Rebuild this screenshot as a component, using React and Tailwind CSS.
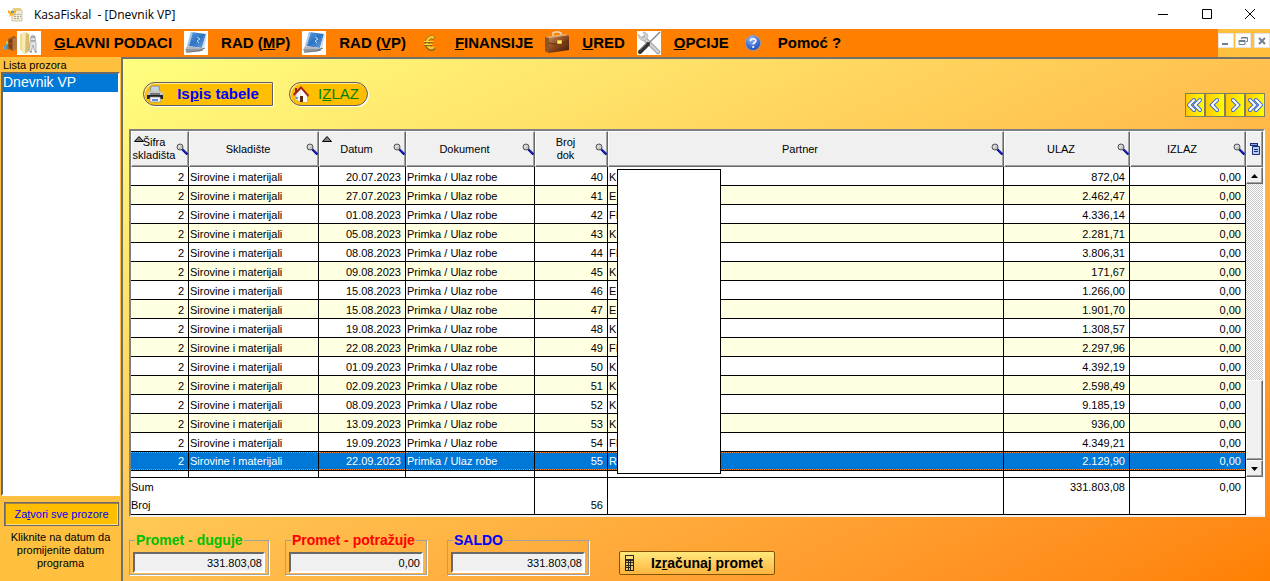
import React from 'react';

const ROWS = [
  ['20.07.2023', 40, 'K', '872,04'],
  ['27.07.2023', 41, 'E', '2.462,47'],
  ['01.08.2023', 42, 'FI', '4.336,14'],
  ['05.08.2023', 43, 'K', '2.281,71'],
  ['08.08.2023', 44, 'FI', '3.806,31'],
  ['09.08.2023', 45, 'K', '171,67'],
  ['15.08.2023', 46, 'E', '1.266,00'],
  ['15.08.2023', 47, 'E', '1.901,70'],
  ['19.08.2023', 48, 'K', '1.308,57'],
  ['22.08.2023', 49, 'FI', '2.297,96'],
  ['01.09.2023', 50, 'K', '4.392,19'],
  ['02.09.2023', 51, 'K', '2.598,49'],
  ['08.09.2023', 52, 'K', '9.185,19'],
  ['13.09.2023', 53, 'K', '936,00'],
  ['19.09.2023', 54, 'FI', '4.349,21'],
  ['22.09.2023', 55, 'R', '2.129,90'],
];

const COLUMNS = [
  { label: 'Šifra skladišta', width: 'w-[58px]', sorted: true },
  { label: 'Skladište', width: 'w-[130px]' },
  { label: 'Datum', width: 'w-[87px]', sorted: true },
  { label: 'Dokument', width: 'w-[129px]' },
  { label: 'Broj dok', width: 'w-[73px]', narrow: true },
  { label: 'Partner', width: '' },
  { label: 'ULAZ', width: 'w-[126px]' },
  { label: 'IZLAZ', width: 'w-[116px]' },
];

const AppIcon = () => (
  <svg width="16" height="16" viewBox="0 0 16 16" aria-hidden="true">
    <path d="M4 3h10v11H4z" fill="#f3ecd2" stroke="#b9b39a" strokeWidth=".7" />
    <path d="M5 1h8v3H5z" fill="#e9cf86" />
    <path d="M6 7h2v1H6zM9 7h2v1H9zM12 7h1v1h-1zM6 9h2v1H6zM9 9h2v1H9zM12 9h1v1h-1zM6 11h2v1H6zM9 11h2v1H9z" fill="#a6a595" />
    <path d="M0 3l4 2 4-2v3L5 7l2 3-3-2-3 2 1-3-2-1z" fill="#f2b521" />
    <path d="M3 4h3v2H3z" fill="#5f9bd8" />
  </svg>
);

const DoorIcon = () => (
  <svg width="14" height="16" viewBox="0 0 14 16" aria-hidden="true">
    <path d="M5 4l6-3 3 2v11l-4 2-5-2z" fill="#9a5a22" />
    <path d="M10 3l4 0v11l-4 2z" fill="#b9763a" />
    <path d="M6 5l3-1v4L6 8zM6 9h3v5l-3-1z" fill="#7a3f12" />
    <path d="M1 11h1v4H1zM3 8h1v6H3z" fill="#4c9ac0" />
    <path d="M3 6h2v3H3zM0 12h1v2H0z" fill="#d9c04a" />
    <path d="M4 10h1v4H4z" fill="#5d9a3e" />
  </svg>
);

const FolderIcon = () => (
  <svg width="24" height="24" viewBox="0 0 24 24" aria-hidden="true">
    <path d="M0 0h24v24H0z" fill="#fff" />
    <path d="M3 3l5-2v20l-5-2z" fill="#efdb94" />
    <path d="M5 2l5-1v20l-3 2-2-2z" fill="#f6e9b4" />
    <path d="M9 2l3 1v17l-4 3z" fill="#d8bd6c" />
    <path d="M12 3h5l1 16h-6z" fill="#efefed" />
    <path d="M14 6c1-2 4-2 4 0l1 6v8l-1 1-2-7-2 7-2-1 1-9z" fill="#e2e2e2" stroke="#999" strokeWidth=".7" />
    <path d="M14 6h4M14 10h4M13 21h2M18 21h2" stroke="#777" />
  </svg>
);

const BookIcon = () => (
  <svg width="24" height="24" viewBox="0 0 24 24" aria-hidden="true">
    <defs>
      <linearGradient id="book" x1="0" y1="0" x2="1" y2="1">
        <stop offset="0" stopColor="#5d9fe0" />
        <stop offset=".5" stopColor="#2f74c4" />
        <stop offset="1" stopColor="#6fa5de" />
      </linearGradient>
    </defs>
    <path d="M0 0h24v24H0z" fill="#fff" />
    <path d="M7 1l15 2-4 14-14-2z" fill="url(#book)" />
    <path d="M7 1l2 0-4 14-2-1z" fill="#a9c9ea" />
    <path d="M3 15l15 2 3 0-4 3-14 2-2-3z" fill="#b4b9bf" />
    <path d="M2 19l14 0 5-2M2 21l13-1 4-1" fill="none" stroke="#5f666e" strokeWidth=".8" />
    <path d="M18 16l4-13 1 1-3 13z" fill="#cfdcec" />
    <path d="M13 6l3 2-3 2 2 2" fill="none" stroke="#c3dcf5" />
  </svg>
);

const EuroIcon = () => (
  <svg width="16" height="16" viewBox="0 0 16 16" aria-hidden="true">
    <path d="M12.500 3.500C9.500 1 5.500 2.500 5 7.500 4.500 13 9 15.500 12.500 12.500" fill="none" stroke="#8a6412" strokeWidth="4" />
    <path d="M12 3C9.500 1 5.500 2.500 5 7.500 4.500 12 9 14.500 12 12" fill="none" stroke="#f5c62a" strokeWidth="2.600" />
    <path d="M2 7h9M2 10h8" stroke="#8a6412" strokeWidth="2" />
    <path d="M2 6.500h9M2 9.500h8" stroke="#ffdc4a" />
  </svg>
);

const BriefcaseIcon = () => (
  <svg width="24" height="24" viewBox="0 0 24 24" aria-hidden="true">
    <defs>
      <linearGradient id="brief" x1="0" y1="0" x2="1" y2="1">
        <stop offset="0" stopColor="#d49c68" />
        <stop offset=".5" stopColor="#8d4b1e" />
        <stop offset="1" stopColor="#3c1804" />
      </linearGradient>
    </defs>
    <path d="M8 6V2l2-1h4l2 1v3" fill="none" stroke="#e8d8c4" strokeWidth="1.500" />
    <path d="M1 6l3 1 19-3 1 1v14L4 22l-4-2z" fill="url(#brief)" />
    <path d="M0 6l19-3 5 1-20 3z" fill="#dcae7d" />
    <path d="M4 7v15l-4-2V6z" fill="#8c5228" />
    <path d="M4 12c7 2 14 1 20-3" fill="none" stroke="#5e2c0c" />
    <path d="M12 9h5v4h-5z" fill="#e6b92c" />
    <path d="M13 10h3v2h-3z" fill="#fff67a" />
  </svg>
);

const ToolsIcon = () => (
  <svg width="24" height="24" viewBox="0 0 24 24" aria-hidden="true">
    <path d="M0 0h24v24H0z" fill="#fff" />
    <path d="M7 7l14 14" stroke="#999" strokeWidth="4.500" strokeLinecap="round" />
    <path d="M7 7l14 14" stroke="#d0d0d0" strokeWidth="2.500" strokeLinecap="round" />
    <path d="M1 3l4 4 3-2-2-4c4 0 6 3 4 7-3 3-8 2-9-5z" fill="#d0d0d0" stroke="#aaa" strokeWidth=".7" />
    <path d="M23 1L11 13" stroke="#888" strokeWidth="1.500" />
    <path d="M11 13l-8 8" stroke="#333" strokeWidth="4" strokeLinecap="round" />
    <path d="M10 12l-7 7" stroke="#777" />
  </svg>
);

const HelpIcon = () => (
  <svg width="16" height="16" viewBox="0 0 16 16" aria-hidden="true">
    <defs>
      <radialGradient id="help" cx=".4" cy=".25" r=".8">
        <stop offset="0" stopColor="#9fbdf2" />
        <stop offset=".6" stopColor="#3f6fd2" />
        <stop offset="1" stopColor="#2346a5" />
      </radialGradient>
    </defs>
    <circle cx="8" cy="8" r="7.500" fill="url(#help)" stroke="#8ba2cc" strokeWidth=".8" />
    <path d="M5.500 6c0-3 5.500-3 5.300 0C10.700 7.600 8.300 7.500 8.200 9.500" fill="none" stroke="#fff" strokeWidth="1.700" />
    <circle cx="8.200" cy="12" r="1.100" fill="#fff" />
  </svg>
);

const PrinterIcon = () => (
  <svg width="18" height="18" viewBox="0 0 18 18" aria-hidden="true">
    <path d="M5 1h8l1 6H4z" fill="#c5d0e0" stroke="#777" strokeWidth=".7" />
    <path d="M1 8l3-2h10l3 2v3H1z" fill="#c4c4c4" />
    <path d="M1 10h16v4H1z" fill="#222" />
    <path d="M4 8h10v2H4z" fill="#777" />
    <path d="M4 12h10l1 5H4z" fill="#f4f4f4" stroke="#888" strokeWidth=".7" />
    <path d="M6 14h6v2H6z" fill="#5d8cd6" />
  </svg>
);

const HouseIcon = () => (
  <svg width="18" height="18" viewBox="0 0 18 18" aria-hidden="true">
    <path d="M4 9l5-6 6 6v8l-6 0-5-2z" fill="#f0f0ee" stroke="#aaa" strokeWidth=".6" />
    <path d="M9 3l6 6v8H9z" fill="#fff" />
    <path d="M9 1L1 9l1 2 7-7 7 8 1-2z" fill="#a3261a" />
    <path d="M3 3h2v4L3 8z" fill="#8f2417" />
    <path d="M8 11h3v6H8z" fill="#5b2c14" />
    <path d="M4 12h2v2H4z" fill="#7393bf" />
  </svg>
);

const MagnifierIcon = () => (
  <svg className="shrink-0" width="12" height="12" viewBox="0 0 12 12" aria-hidden="true">
    <path d="M6 6l5.500 5.500" stroke="#000080" strokeWidth="2.400" />
    <path d="M6.500 6l5 5" stroke="#3c3cff" />
    <circle cx="4" cy="4" r="3" fill="#c8c8c8" stroke="#555" />
    <path d="M2.500 4.500L4 2.500" stroke="#fff" />
  </svg>
);

const CalculatorIcon = () => (
  <svg width="9" height="16" viewBox="0 0 9 16" aria-hidden="true">
    <path d="M0 0h9v16H0z" fill="#2b2620" />
    <path d="M1 1h7v3H1z" fill="#ffe27a" />
    <path d="M1 6h2v1H1zM4 6h1v1H4zM6 6h2v1H6zM1 8h2v2H1zM4 8h1v2H4zM6 8h2v2H6zM1 11h2v1H1zM4 11h1v1H4zM6 11h2v4H6zM1 13h2v2H1zM4 13h1v2H4z" fill="#f0c65c" />
  </svg>
);

const ColumnsIcon = () => (
  <svg width="10" height="12" viewBox="0 0 10 12" aria-hidden="true">
    <path d="M0 0h8v3H0z" fill="#1a2f78" />
    <path d="M1 1h6v1H1z" fill="#8fa8e8" />
    <path d="M2.500 3.500h7v8h-7z" fill="#b8ccf8" stroke="#1a2f78" />
    <path d="M4 6.500h4M4 8.500h4" stroke="#1a2f78" />
  </svg>
);

const Chevron = ({ paths }) => (
  <svg width="16" height="16" viewBox="0 0 16 16" fill="none" strokeLinecap="round" aria-hidden="true">
    {paths.map((d) => <path key={d} d={d} stroke="#3c68d8" strokeWidth="4" />)}
    {paths.map((d) => <path key={d} d={d} stroke="#fff" strokeWidth="2" />)}
  </svg>
);

const NAV = [
  { label: 'Prvi', paths: ['M7 3L2 8l5 5', 'M13 3L8 8l5 5'] },
  { label: 'Prethodni', paths: ['M10 3L5 8l5 5'] },
  { label: 'Sljedeći', paths: ['M6 3l5 5-5 5'] },
  { label: 'Zadnji', paths: ['M3 3l5 5-5 5', 'M9 3l5 5-5 5'] },
];

const MENU = [
  { icon: <FolderIcon />, text: <><u>G</u>LAVNI PODACI</> },
  { icon: <BookIcon />, text: <>RAD (<u>M</u>P)</> },
  { icon: <BookIcon />, text: <>RAD (<u>V</u>P)</> },
  { icon: <EuroIcon />, text: <><u>F</u>INANSIJE</> },
  { icon: <BriefcaseIcon />, text: <><u>U</u>RED</> },
  { icon: <ToolsIcon />, text: <><u>O</u>PCIJE</> },
  { icon: <HelpIcon />, text: 'Pomoć ?' },
];

const TitleBar = () => (
  <header className="flex h-[29px] items-center bg-white pl-2 font-['Open_Sans',sans-serif] text-xs text-black">
    <AppIcon />
    <span className="ml-[10px] flex-1 whitespace-pre">KasaFiskal  - [Dnevnik VP]</span>
    <button aria-label="Smanji" className="flex h-full w-[45px] items-center justify-center">
      <svg width="10" height="10" viewBox="0 0 10 10"><path d="M0 4.500h10" stroke="#000" /></svg>
    </button>
    <button aria-label="Povećaj" className="flex h-full w-[45px] items-center justify-center">
      <svg width="11" height="11" viewBox="0 0 11 11"><path d="M.5.5h9v9h-9z" fill="none" stroke="#000" /></svg>
    </button>
    <button aria-label="Zatvori" className="flex h-full w-10 items-center justify-center">
      <svg width="11" height="11" viewBox="0 0 11 11"><path d="M0 0l10 10M10 0L0 10" stroke="#000" /></svg>
    </button>
  </header>
);

const MdiButton = ({ label, children }) => (
  <button aria-label={label} className="flex h-[15px] w-4 items-center justify-center border border-[#e4e4e4] bg-white">
    <svg width="10" height="10" viewBox="0 0 10 10" fill="none" stroke="#708090">{children}</svg>
  </button>
);

const MenuBar = () => (
  <nav className="flex h-7 items-stretch bg-[#ff8000] pl-[3px]">
    <div className="flex items-center"><DoorIcon /></div>
    <div className="flex flex-1 items-center gap-3">
      {MENU.map((item, i) => (
        <button key={i} className="flex items-center gap-[13px] whitespace-nowrap text-[15px] leading-5 font-bold">
          <span className="flex w-6 justify-center">{item.icon}</span>
          <span>{item.text}</span>
        </button>
      ))}
    </div>
    <div className="flex items-start gap-px bg-[#ffc040] pt-1">
      <MdiButton label="Smanji prozor"><path d="M1 8h6" strokeWidth="2" /></MdiButton>
      <MdiButton label="Vrati prozor"><path d="M3.500 3V1.500h6v4H8M1 4.500h6v4H1zM1 5.500h6M4 2h5" /></MdiButton>
      <span className="w-px" />
      <MdiButton label="Zatvori prozor"><path d="M2 2l6 6M8 2L2 8" strokeWidth="2" /></MdiButton>
    </div>
  </nav>
);

const Sidebar = () => (
  <aside className="flex w-[121px] shrink-0 flex-col bg-[#ffc040]">
    <h2 className="pt-[2px] pl-[3px] leading-[13px]">Lista prozora</h2>
    <ul className="mx-px flex-1 border-2 border-t-[#696969] border-r-white border-b-white border-l-[#696969] bg-white">
      <li className="bg-[#0078d7] pb-[2px] text-sm leading-4 text-white">Dnevnik VP</li>
    </ul>
    <button className="mt-[6px] mr-[2px] ml-1 h-6 border border-[#696969] bg-[#ffbf00] leading-4 whitespace-nowrap text-[#0000ff] shadow-[inset_1px_1px_0_#a08040,inset_-1px_-1px_0_#ffe08a]">
      Za<u>t</u>vori sve prozore
    </button>
    <p className="px-2 pt-[5px] pb-[11px] text-center leading-[13px]">Kliknite na datum da promijenite datum programa</p>
  </aside>
);

const Toolbar = () => (
  <div className="flex h-[70px] items-start justify-between">
    <div className="flex gap-4 pt-[23px] pl-[14px] text-[15px] font-bold">
      <button className="flex h-6 w-[130px] items-center rounded-l-full border border-[#606060] bg-[#ffbf00] pl-[2px] text-[#0000ff] shadow-[1px_1px_0_#fff,inset_1px_1px_0_#ffe9a0]">
        <PrinterIcon />
        <span className="flex-1 text-center leading-5">Is<u>p</u>is tabele</span>
      </button>
      <button className="flex h-6 w-[79px] items-center rounded-full border border-[#606060] bg-[#ffbf00] pl-[2px] text-[#008000] shadow-[1px_1px_0_#fff,inset_1px_1px_0_#ffe9a0]">
        <HouseIcon />
        <span className="flex-1 text-center leading-5 font-normal">I<u>Z</u>LAZ</span>
      </button>
    </div>
    <div className="mt-[34px] flex">
      {NAV.map(({ label, paths }) => (
        <button key={label} aria-label={label} className="flex h-6 w-5 items-center justify-center border border-[#808060] bg-linear-to-r from-[#ffc800] to-[#ffff00]">
          <Chevron paths={paths} />
        </button>
      ))}
    </div>
  </div>
);

const bevel = 'border border-t-white border-l-white border-r-[#696969] border-b-[#696969] bg-[#f0f0f0] shadow-[inset_-1px_-1px_0_#a0a0a0]';

const HeaderCell = ({ label, width, sorted, narrow }) => (
  <th className={`relative h-9 p-0 font-normal ${bevel} ${width}`}>
    {sorted && (
      <svg className="absolute top-1 left-[2px]" width="10" height="6" viewBox="0 0 10 6" aria-hidden="true">
        <path d="M5 .5L9.500 5.500h-9z" fill="#808080" stroke="#000" />
      </svg>
    )}
    <div className="flex items-center">
      <span className={`min-w-0 flex-1 text-center leading-[13px] ${narrow ? 'px-4' : ''}`}>{label}</span>
      <MagnifierIcon />
    </div>
  </th>
);

const Cell = ({ children, right, selected }) => (
  <td className="h-[19px] overflow-hidden border-r border-b border-black p-0 whitespace-nowrap">
    <div className={`h-[18px] ${right ? 'pr-1 text-right' : 'pl-px'} ${selected ? 'border-y border-dotted border-[#ff8728] bg-[#0078d7] leading-4 text-white' : 'leading-5'}`}>
      {children}
    </div>
  </td>
);

const Ledger = () => (
  <div className="relative min-w-0 flex-1">
    <table className="w-full table-fixed border-separate border-spacing-0 bg-white">
      <thead>
        <tr>{COLUMNS.map((c) => <HeaderCell key={c.label} {...c} />)}</tr>
      </thead>
      <tbody>
        {ROWS.map(([date, no, partner, inflow], i) => {
          const selected = i === ROWS.length - 1;
          return (
            <tr key={no} className={i % 2 ? 'bg-[#ffffe1]' : 'bg-white'}>
              <Cell right selected={selected}>2</Cell>
              <Cell selected={selected}>Sirovine i materijali</Cell>
              <Cell right selected={selected}>{date}</Cell>
              <Cell selected={selected}>Primka / Ulaz robe</Cell>
              <Cell right selected={selected}>{no}</Cell>
              <Cell selected={selected}>{partner}</Cell>
              <Cell right selected={selected}>{inflow}</Cell>
              <Cell right selected={selected}>0,00</Cell>
            </tr>
          );
        })}
        <tr>
          {COLUMNS.map((c) => <td key={c.label} className="h-[7px] border-r border-b border-black p-0" />)}
        </tr>
      </tbody>
      <tfoot className="leading-[18px]">
        <tr>
          <td colSpan={4} className="h-[18px] border-r border-black p-0">Sum</td>
          <td className="border-r border-black p-0" />
          <td className="border-r border-black p-0" />
          <td className="border-r border-black p-0 pr-1 text-right">331.803,08</td>
          <td className="border-r border-black p-0 pr-1 text-right">0,00</td>
        </tr>
        <tr>
          <td colSpan={4} className="h-[19px] border-r border-b border-black p-0">Broj</td>
          <td className="border-r border-b border-black p-0 pr-1 text-right">56</td>
          <td className="border-r border-b border-black p-0" />
          <td className="border-r border-b border-black p-0" />
          <td className="border-r border-b border-black p-0" />
        </tr>
      </tfoot>
    </table>
    {/* covers the partner names */}
    <div className="absolute top-[38px] left-[486px] h-[305px] w-[104px] border border-black bg-white" />
  </div>
);

const ScrollColumn = () => (
  <div className="flex w-[17px] shrink-0 flex-col bg-white">
    <button aria-label="Kolone" className={`flex h-9 items-center justify-center ${bevel}`}><ColumnsIcon /></button>
    <button aria-label="Gore" className={`flex h-[17px] items-center justify-center ${bevel}`}>
      <svg width="7" height="4" viewBox="0 0 7 4"><path d="M3.500 0L7 4H0z" /></svg>
    </button>
    <div className="flex flex-1 flex-col justify-end bg-[conic-gradient(#fff_25%,#c8c8c8_0_50%,#fff_0_75%,#c8c8c8_0)] bg-size-[2px_2px]">
      <div className={`h-20 ${bevel}`} />
    </div>
    <button aria-label="Dolje" className={`mb-[38px] flex h-[17px] items-center justify-center ${bevel}`}>
      <svg width="7" height="4" viewBox="0 0 7 4"><path d="M0 0h7L3.500 4z" /></svg>
    </button>
  </div>
);

const TotalBox = ({ id, label, value, color, width }) => (
  <fieldset className={`h-[43px] border border-[#a0a0a0] px-[3px] shadow-[1px_1px_0_#fff] ${width}`}>
    <legend className={`ml-[2px] px-px text-sm leading-4 font-bold whitespace-nowrap ${color}`}>
      <label htmlFor={id}>{label}</label>
    </legend>
    <input
      id={id}
      readOnly
      value={value}
      className="mt-1 block h-[21px] w-full border-2 border-t-[#696969] border-r-white border-b-white border-l-[#696969] bg-[#f0f0f0] pr-px text-right outline-none"
    />
  </fieldset>
);

export default function App() {
  return (
    <div className="flex min-h-screen flex-col font-['Liberation_Sans',sans-serif] text-[11px] text-black">
      <TitleBar />
      <MenuBar />
      <div className="flex flex-1">
        <Sidebar />
        <main className="min-w-0 flex-1 border-t-2 border-l-2 border-[#707070] bg-linear-to-br from-[#ffff80] to-[#ff8000] pr-[5px] pb-[6px] pl-[6px]">
          <Toolbar />
          <div className="flex border-2 border-t-[#808080] border-r-white border-b-[#f0f0f0] border-l-[#808080]">
            <Ledger />
            <ScrollColumn />
          </div>
          <div className="flex items-end pt-[15px]">
            <div className="flex gap-4">
              <TotalBox id="duguje" label="Promet - duguje" value="331.803,08" color="text-[#00c000]" width="w-[140px]" />
              <TotalBox id="potrazuje" label="Promet - potražuje" value="0,00" color="text-[#ff0000]" width="w-[142px]" />
            </div>
            <div className="ml-5 flex items-end gap-[30px]">
              <TotalBox id="saldo" label="SALDO" value="331.803,08" color="text-[#0000ff]" width="w-[142px]" />
              <button className="flex h-6 w-[156px] items-center rounded-[2px] border border-[#805500] bg-linear-to-b from-[#ffe97c] to-[#ffb43c] pl-[5px] text-sm font-bold">
                <CalculatorIcon />
                <span className="flex-1 pl-[6px] text-center leading-5">Iz<u>r</u>ačunaj promet</span>
              </button>
            </div>
          </div>
        </main>
      </div>
    </div>
  );
}
